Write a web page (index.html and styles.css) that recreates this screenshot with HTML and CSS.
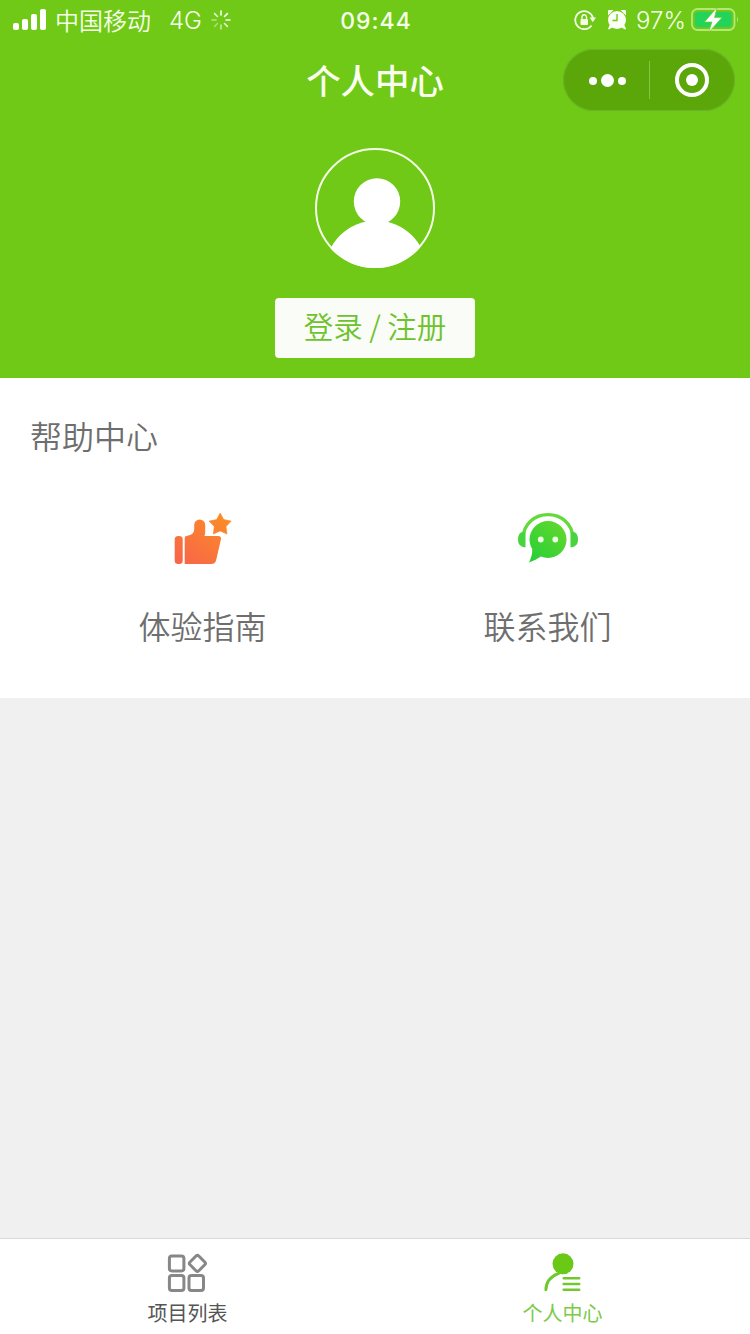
FILE: index.html
```html
<!DOCTYPE html>
<html lang="zh-CN">
<head>
<meta charset="utf-8">
<title>个人中心</title>
<link rel="stylesheet" href="styles.css">
</head>
<body>
<div class="app">
  <header class="header">
    <div class="status">
      <div class="status-left">
        <svg class="signal" width="34" height="22" viewBox="0 0 34 22" fill="#fff">
          <rect x="0" y="14" width="6" height="7" rx="2"/><rect x="9" y="10" width="6" height="11" rx="2"/><rect x="18" y="5" width="6" height="16" rx="2"/><rect x="27" y="0" width="6" height="21" rx="2"/>
        </svg>
        <span class="carrier">中国移动</span>
        <span class="network">4G</span>
        <svg class="spinner" width="20" height="20" viewBox="-10 -10 20 20" stroke="#fff" stroke-width="1.6" stroke-linecap="round">
          <path d="M0-5V-9"/><path d="M3.500-3.500 6.400-6.400"/><path d="M5 0H9" opacity=".9"/><path d="M3.500 3.500 6.400 6.400" opacity=".8"/><path d="M0 5V9" opacity=".6"/><path d="M-3.500 3.500-6.400 6.400" opacity=".4"/><path d="M-5 0H-9" opacity=".5"/><path d="M-3.500-3.500-6.400-6.400" opacity=".8"/>
        </svg>
      </div>
      <div class="time">09:44</div>
      <div class="status-right">
        <svg width="22" height="22" viewBox="0 0 22 22" fill="none" stroke="#f4fde8" stroke-width="1.800">
          <path d="M19 9A9 9 0 1 0 17.500 16.500"/><path d="M15.600 8.500h6.400l-3.200 4.800z" fill="#f4fde8" stroke="none"/><rect x="6.500" y="10" width="7.500" height="6" rx="1" fill="#f4fde8" stroke="none"/><path d="M8 10V8a2.250 2.250 0 0 1 4.500 0v2" stroke-width="1.400"/>
        </svg>
        <svg class="alarm" width="20" height="22" viewBox="0 0 20 22">
          <g fill="#fbfff5"><circle cx="10" cy="11" r="9"/><path d="M1 6.500V2q0-1 1-1h4.500zM19 6.500V2q0-1-1-1h-4.500zM3 15l-2 5 1 .6 5-3zM17 15l2 5-1 .6-5-3z"/></g>
          <path d="M10 5v6.500H5.500" fill="none" stroke="#6fc916" stroke-width="1.400"/>
        </svg>
        <span class="percent">97%</span>
        <svg class="battery" width="48" height="26" viewBox="0 0 48 26">
          <rect x="1" y="2" width="42.500" height="21" rx="5.500" fill="none" stroke="#b5e87a" stroke-width="1.800"/>
          <rect x="4" y="5" width="36.500" height="15" rx="3" fill="#23d45c"/>
          <path d="M46 9.500q2 3 0 6z" fill="#b5e87a"/>
          <path d="M26 .5 13.500 15h7.500l-3.500 10.500L31 10.500h-7.500z" fill="#fff" stroke="#6fc916" stroke-width=".6"/>
        </svg>
      </div>
    </div>
    <div class="nav">
      <h1 class="title">个人中心</h1>
      <div class="capsule">
        <svg width="172" height="62" viewBox="0 0 172 62" fill="#fff">
          <circle cx="30" cy="32" r="4"/><circle cx="44.500" cy="31.500" r="6.500"/><circle cx="59" cy="32" r="4"/>
          <path d="M86.500 12v38" stroke="#7fc44b"/>
          <circle cx="129" cy="31" r="15" fill="none" stroke="#fff" stroke-width="4"/><circle cx="129" cy="31" r="6"/>
        </svg>
      </div>
    </div>
    <svg class="avatar" width="120" height="120" viewBox="0 0 120 120">
      <defs><clipPath id="ring"><circle cx="60" cy="60" r="60"/></clipPath></defs>
      <circle cx="60" cy="60" r="59" fill="none" stroke="#f4ffe6" stroke-width="2"/>
      <g fill="#fff" clip-path="url(#ring)"><circle cx="62" cy="53.500" r="23.200"/><path d="M50 70q2 2 1.500 4L40 79h44l-12-5q0-2 2-4z"/><circle cx="61" cy="123.500" r="51"/></g>
    </svg>
    <button class="login">登录 / 注册</button>
  </header>
  <section class="help">
    <h2 class="help-title">帮助中心</h2>
    <div class="help-grid">
      <a class="help-item">
        <svg width="60" height="60" viewBox="0 0 60 60">
          <defs><linearGradient id="orange" gradientUnits="userSpaceOnUse" x1="46" y1="4" x2="8" y2="56"><stop stop-color="#fb8b27"/><stop offset="1" stop-color="#f8654a"/></linearGradient></defs>
          <g fill="url(#orange)" transform="translate(-.8)"><rect x="2.500" y="27" width="8" height="28" rx="3.500"/><path d="M12.500 29q0-2 2-2c5-1 7.500-3 7.500-7v-4a5.500 5.500 0 0 1 11 0v7q0 3.500-1 4H46q3.500 0 2.700 3.500L44 51q-1 4-5 4H12.500z"/><path d="m48 4 3.600 6.600 7.400 1.500-5.200 5.500 1 7.500-6.800-3.200-6.900 3.200 1-7.500-5.200-5.500 7.500-1.500z" stroke="url(#orange)" stroke-width=".6" stroke-linejoin="round"/></g>
        </svg>
        <span class="help-label">体验指南</span>
      </a>
      <a class="help-item">
        <svg width="60" height="60" viewBox="0 0 60 60">
          <defs><linearGradient id="green" gradientUnits="userSpaceOnUse" x1="48" y1="12" x2="12" y2="50"><stop stop-color="#66d92b"/><stop offset="1" stop-color="#29cf38"/></linearGradient></defs>
          <path d="M4.800 29C6 14 17 5.600 30 5.600S54 14 55.200 29" fill="none" stroke="#62da3c" stroke-width="3.200"/>
          <path d="M7.500 23v15.500Q0 38 0 31t4-8zM52.500 23v15.500q7.500-.5 7.500-7.500t-4-8z" fill="#48d43d"/>
          <g fill="url(#green)"><circle cx="30" cy="30.500" r="18.500"/><path d="M14 40Q15 45 11 53.500q6-2 12-6z"/></g>
          <circle cx="22.800" cy="30.500" r="2.900" fill="#e9fbe0"/><circle cx="37.300" cy="30.500" r="2.900" fill="#e9fbe0"/>
        </svg>
        <span class="help-label">联系我们</span>
      </a>
    </div>
  </section>
  <main class="filler"></main>
  <nav class="tabs">
    <a class="tab">
      <svg width="44" height="44" viewBox="1.500 -.5 44 44" fill="none" stroke="#878787" stroke-width="3" stroke-linejoin="round">
        <rect x="4.900" y="7.400" width="14.500" height="15" rx="2.500"/><rect x="4.900" y="26.900" width="14.500" height="15" rx="2.500"/><rect x="24.500" y="26.900" width="14.500" height="15" rx="2.500"/><rect x="26.700" y="8.700" width="12.400" height="12.400" rx="2" transform="rotate(45 32.900 14.900)"/>
      </svg>
      <span>项目列表</span>
    </a>
    <a class="tab active">
      <svg width="44" height="44" viewBox="1.300 -.8 44 44" fill="none" stroke="#70c92c" stroke-width="2.500" stroke-linecap="round">
        <circle cx="23.300" cy="15" r="10.500" fill="#6ac916" stroke="none"/><path d="M19 24.500Q6.500 29 6.200 41" stroke-width="3"/><path d="M24 29.500h15.500M24 35.200h15.500M24 40.900h15.500"/>
      </svg>
      <span>个人中心</span>
    </a>
  </nav>
</div>
</body>
</html>
```
FILE: styles.css
```css
* { box-sizing: border-box; }
body { margin: 0; font-family: "Noto Sans CJK SC", sans-serif; }
svg { display: block; flex: none; }
h1, h2 { margin: 0; }
.app { width: 750px; height: 1334px; display: flex; flex-direction: column; background: #f0f0f0; }
.header { height: 378px; background: #6fc916; display: flex; flex-direction: column; align-items: center; }
.status { width: 100%; height: 40px; display: grid; grid-template-columns: 1fr auto 1fr; align-items: center; padding: 0 11px 0 13px; color: #f6ffe9; }
.status-left, .status-right { display: flex; align-items: center; }
.status-right { justify-content: flex-end; }
.carrier { margin-left: 8px; font-size: 24px; line-height: 38px; font-weight: 350; }
.network { margin-left: 18px; padding-top: 2px; font: 300 24px/38px Inter, sans-serif; }
.spinner { margin-left: 9px; }
.time { padding-top: 2px; font: 500 23px/38px Inter, sans-serif; letter-spacing: 1px; }
.alarm { margin-left: 11px; }
.percent { margin-left: 9px; padding-top: 2px; font: 300 24px/38px Inter, sans-serif; }
.battery { margin-left: 5px; }
.nav { width: 100%; height: 80px; display: grid; grid-template-columns: 1fr auto 1fr; align-items: center; padding: 0 15px; }
.title { grid-column: 2; font-size: 34.4px; line-height: 78px; padding-bottom: 2px; font-weight: 500; color: #faffef; }
.capsule { justify-self: end; width: 172px; height: 62px; border-radius: 31px; background: #5ba70a; box-shadow: inset 0 0 0 1px #6bb42a; }
.avatar { margin-top: 28px; }
.login { margin-top: 30px; width: 200px; height: 60px; padding: 0 0 5px; border: 0; border-radius: 4px; background: #fafcf7; color: #6dc32c; font: 350 29.5px/55px "Noto Sans CJK SC", sans-serif; }
.help { height: 320px; background: #fff; padding: 33px 30px 0; color: #6e6e6e; }
.help-title { font-size: 32px; line-height: 48px; font-weight: 350; }
.help-grid { display: grid; grid-template-columns: 1fr 1fr; margin-top: 50px; }
.help-item { display: flex; flex-direction: column; align-items: center; }
.help-label { margin-top: 32px; font-size: 32px; line-height: 48px; font-weight: 350; }
.filler { flex: 1; }
.tabs { height: 96px; border-top: 1px solid #d9d9d9; background: #fff; display: grid; grid-template-columns: 1fr 1fr; }
.tab { display: flex; flex-direction: column; align-items: center; padding-top: 9px; font-size: 20px; line-height: 30px; color: #555; }
.tab span { margin-top: 6px; }
.tab.active { color: #7bcb46; }
```
